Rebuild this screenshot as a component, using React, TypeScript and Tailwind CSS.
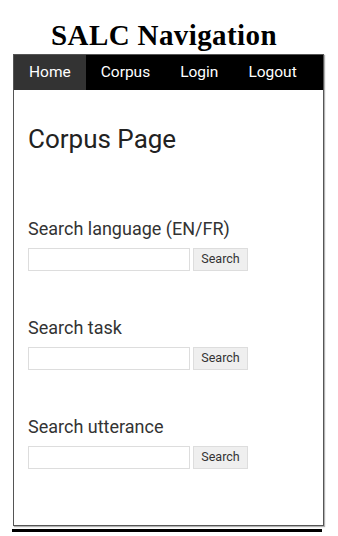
export default function App() {
  const sections = [
    { label: "Search language (EN/FR)", mt: "mt-[64px]" },
    { label: "Search task", mt: "mt-[46px]" },
    { label: "Search utterance", mt: "mt-[46px]" },
  ];

  return (
    <div className="w-[338px] h-[536px] bg-white overflow-hidden">
      <h1 className="w-[328px] text-center pt-[19px] h-[54px] text-[29px] leading-[32px] tracking-[0.4px] font-bold text-black font-['Liberation_Serif',serif]">
        SALC Navigation
      </h1>
      <div className="ml-[13px] w-[311px] h-[472px] border border-[#555] shadow-[1px_1px_1px_rgba(0,0,0,0.3)] font-['Roboto',sans-serif]">
        <nav className="h-[35px] bg-black flex text-white text-[15.5px]">
          <a className="px-[15px] flex items-center bg-[#333]">Home</a>
          <a className="px-[15px] flex items-center">Corpus</a>
          <a className="px-[15px] flex items-center">Login</a>
          <a className="px-[15px] flex items-center">Logout</a>
        </nav>
        <div className="px-[14px]">
          <h2 className="mt-[34px] text-[26px] leading-[30px] text-[#222]">Corpus Page</h2>
          {sections.map((s) => (
            <div key={s.label} className={s.mt}>
              <div className="text-[18px] leading-[21px] text-[#333]">{s.label}</div>
              <div className="mt-[9px] flex gap-[3px]">
                <input className="w-[162px] h-[23px] border border-[#ddd] bg-white" />
                <button className="w-[55px] h-[23px] border border-[#ddd] bg-[#efefef] text-[12.5px] text-[#333]">
                  Search
                </button>
              </div>
            </div>
          ))}
        </div>
      </div>
      <div className="ml-[12px] mt-[3px] w-[310px] h-[3px] bg-black" />
    </div>
  );
}
